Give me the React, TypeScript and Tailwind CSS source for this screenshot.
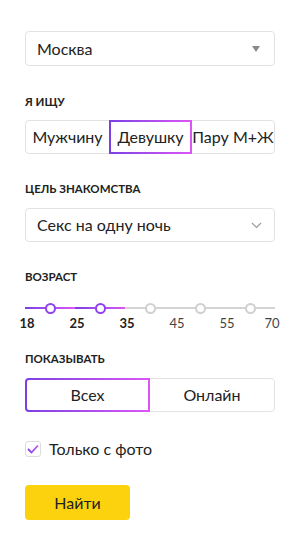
import React from "react";

const font = { fontFamily: "Lato, 'Noto Sans', sans-serif" };

function Label({ children }: { children: React.ReactNode }) {
  return (
    <div className="text-[11.5px] leading-[16px] font-bold uppercase text-[#222]">
      {children}
    </div>
  );
}

export default function App() {
  const ticks = [
    { v: "18", x: 27, b: true },
    { v: "25", x: 77, b: true },
    { v: "35", x: 127, b: true },
    { v: "45", x: 177, b: false },
    { v: "55", x: 227, b: false },
    { v: "70", x: 272, b: false },
  ];
  const knobs = [50, 100, 150, 200, 250];
  return (
    <div className="w-[300px] h-[551px] bg-white overflow-hidden" style={font}>
      <div className="flex flex-col px-[25px] pt-[31px] text-[#222]">
        <div className="h-[35px] border border-[#e2e2e2] rounded-[4px] flex items-center justify-between pl-[11px] pr-[14px]">
          <span className="text-[16px]">Москва</span>
          <svg width="8" height="6" viewBox="0 0 8 6">
            <path d="M0 0 L8 0 L4 6 Z" fill="#8a8a8a" />
          </svg>
        </div>

        <div className="mt-[28px]">
          <Label>Я ищу</Label>
        </div>
        <div className="mt-[10px] h-[34px] flex border border-[#e2e2e2] rounded-[4px] text-[16px]">
          <div className="w-[83px] flex items-center justify-center">Мужчину</div>
          <div className="w-[83px] -my-px p-[2px] bg-gradient-to-r from-[#7b3fe4] to-[#dd55f5]">
            <div className="h-full bg-white flex items-center justify-center">Девушку</div>
          </div>
          <div className="flex-1 flex items-center justify-center whitespace-nowrap">Пару М+Ж</div>
        </div>

        <div className="mt-[27px]">
          <Label>Цель знакомства</Label>
        </div>
        <div className="mt-[11px] h-[34px] border border-[#e2e2e2] rounded-[4px] flex items-center justify-between pl-[11px] pr-[12px]">
          <span className="text-[16px]">Секс на одну ночь</span>
          <svg width="11" height="7" viewBox="0 0 11 7">
            <path d="M1 1 L5.5 5.5 L10 1" fill="none" stroke="#9a9a9a" strokeWidth="1.2" />
          </svg>
        </div>

        <div className="mt-[27px]">
          <Label>Возраст</Label>
        </div>
        <div className="relative mt-[16px] h-[40px] -mx-[25px]">
          <div className="absolute left-[25px] right-[25px] top-[6px] h-[2px] bg-[#d4d4d4]" />
          <div className="absolute left-[25px] w-[50px] top-[6px] h-[2px] bg-gradient-to-r from-[#7b3fe4] to-[#dd55f5]" />
          <div className="absolute left-[75px] w-[50px] top-[6px] h-[2px] bg-gradient-to-r from-[#7b3fe4] to-[#dd55f5]" />
          {knobs.map((x, i) => (
            <div
              key={x}
              className={
                "absolute top-[2px] w-[11px] h-[11px] rounded-full bg-white border-2 " +
                (i < 2 ? "border-[#8e44ec]" : "border-[#d0d0d0]")
              }
              style={{ left: x - 5.5 }}
            />
          ))}
          {ticks.map((t) => (
            <div
              key={t.v}
              className={
                "absolute top-[14px] text-[13px] leading-[16px] -translate-x-1/2 " +
                (t.b ? "font-bold text-[#222]" : "text-[#444]")
              }
              style={{ left: t.x }}
            >
              {t.v}
            </div>
          ))}
        </div>

        <div className="mt-[10px]">
          <Label>Показывать</Label>
        </div>
        <div className="mt-[11px] h-[34px] flex border border-[#e2e2e2] rounded-[4px] text-[16px]">
          <div className="w-[125px] -my-px -ml-px p-[2px] rounded-l-[4px] bg-gradient-to-r from-[#7b3fe4] to-[#dd55f5]">
            <div className="h-full bg-white rounded-l-[2px] flex items-center justify-center">Всех</div>
          </div>
          <div className="flex-1 flex items-center justify-center">Онлайн</div>
        </div>

        <div className="mt-[25px] flex items-center gap-[8px]">
          <div className="w-[16px] h-[16px] border border-[#dcdcdc] rounded-[3px] flex items-center justify-center">
            <svg width="12" height="10" viewBox="0 0 12 10">
              <defs>
                <linearGradient id="ck" x1="0" x2="1" y1="0" y2="0">
                  <stop offset="0" stopColor="#8a3fe8" />
                  <stop offset="1" stopColor="#c04ff2" />
                </linearGradient>
              </defs>
              <path d="M1 5 L4.5 8.5 L11 1.5" fill="none" stroke="url(#ck)" strokeWidth="1.8" />
            </svg>
          </div>
          <span className="text-[16px]">Только с фото</span>
        </div>

        <div className="mt-[24px]">
          <button className="w-[105px] h-[35px] bg-[#fcd20f] rounded-[4px] text-[16px] text-[#222] flex items-center justify-center">
            Найти
          </button>
        </div>
      </div>
    </div>
  );
}
